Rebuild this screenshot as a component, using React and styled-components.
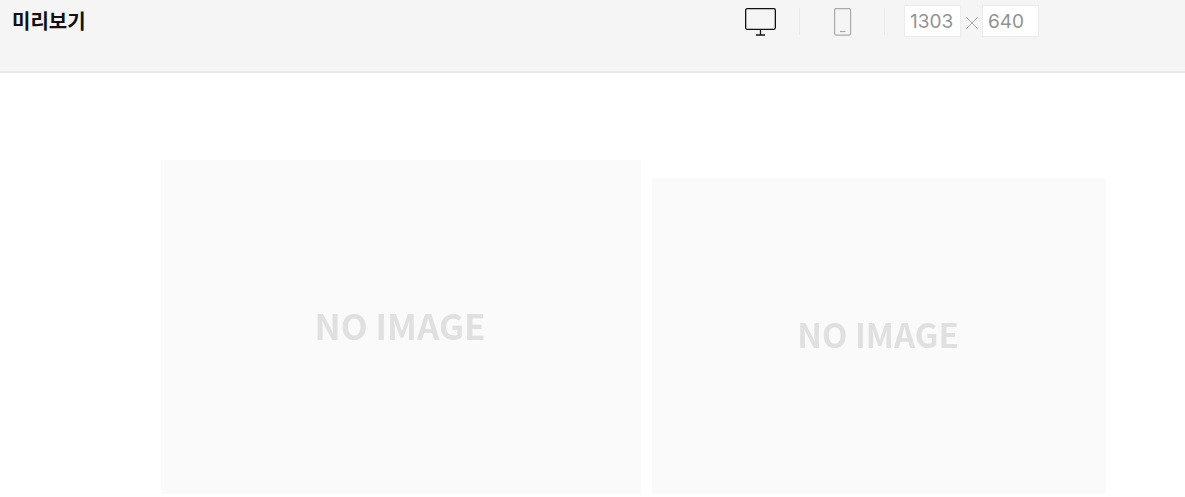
import React from "react";
import styled, { createGlobalStyle } from "styled-components";

const GlobalStyle = createGlobalStyle`
  html, body {
    margin: 0;
    padding: 0;
    background: #fff;
    overflow: hidden;
    font-family: "Noto Sans CJK KR", "Noto Sans", sans-serif;
  }
  * {
    box-sizing: border-box;
  }
`;

const Header = styled.header`
  display: flex;
  align-items: flex-start;
  height: 73px;
  background-color: #f5f5f5;
  border-bottom: 2px solid #e8e8e8;
`;

const Title = styled.h1`
  margin: 7px 0 0 12px;
  width: 733px;
  font-size: 20px;
  line-height: 28px;
  font-weight: 700;
  color: #111;
`;

const Device = styled.button`
  display: flex;
  justify-content: center;
  align-items: center;
  width: ${(props) => props.width}px;
  height: 28px;
  margin-top: 8px;
  padding: 0;
  border: 0;
  background: transparent;
`;

const Divider = styled.span`
  width: 1px;
  height: 27px;
  margin: 8px ${(props) => props.right}px 0 ${(props) => props.left}px;
  background-color: #e9e9e9;
`;

const SizeInput = styled.input`
  width: ${(props) => props.width}px;
  height: 32px;
  margin-top: 5px;
  padding: 0 5px;
  border: 1px solid #ececec;
  background-color: #fff;
  font-family: "Inter", "Roboto", sans-serif;
  font-size: 19px;
  font-weight: 400;
  color: #939393;
  outline: none;
`;

const Times = styled.svg`
  width: 12px;
  height: 12px;
  margin: 17px 4px 0 5px;
`;

const Stage = styled.main`
  display: flex;
  align-items: flex-end;
  gap: 11px;
  height: 421px;
  padding: 87px 0 0 161px;
`;

const Placeholder = styled.div`
  display: flex;
  justify-content: center;
  align-items: center;
  width: ${(props) => props.width}px;
  height: ${(props) => props.height}px;
  padding: 0 2px ${(props) => props.lift}px 0;
  background-color: #fafafa;
`;

const PlaceholderLabel = styled.span`
  font-size: ${(props) => props.size}px;
  font-weight: 700;
  color: #e0e0e0;
  will-change: opacity;
`;

const App = () => {
  return (
    <>
      <GlobalStyle />
      <Header>
        <Title>미리보기</Title>
        <Device width={31} aria-label="PC">
          <svg width="31" height="28" viewBox="0 0 31 28" fill="none" stroke="#111" strokeWidth="1.3">
            <rect x="0.65" y="0.65" width="29.7" height="20.7" rx="1.5" />
            <path d="M15.5 21.5V27M11 27H20" />
          </svg>
        </Device>
        <Divider left={23} right={34} />
        <Device width={18} aria-label="Mobile">
          <svg width="18" height="28" viewBox="0 0 18 28" fill="none" stroke="#a9a9a9" strokeWidth="1.2">
            <rect x="0.6" y="0.6" width="16" height="26.6" rx="1.5" />
            <path d="M6 23.5H11.5" />
          </svg>
        </Device>
        <Divider left={32} right={19} />
        <SizeInput width={57} defaultValue="1303" />
        <Times viewBox="0 0 12 12" fill="none" stroke="#a8a8a8" strokeWidth="1">
          <path d="M0.5 0.5L11.5 11.5M11.5 0.5L0.5 11.5" />
        </Times>
        <SizeInput width={57} defaultValue="640" />
      </Header>
      <Stage>
        <Placeholder width={480} height={334} lift={5}>
          <PlaceholderLabel size={35}>NO IMAGE</PlaceholderLabel>
        </Placeholder>
        <Placeholder width={454} height={316} lift={4}>
          <PlaceholderLabel size={33}>NO IMAGE</PlaceholderLabel>
        </Placeholder>
      </Stage>
    </>
  );
};

export default App;
